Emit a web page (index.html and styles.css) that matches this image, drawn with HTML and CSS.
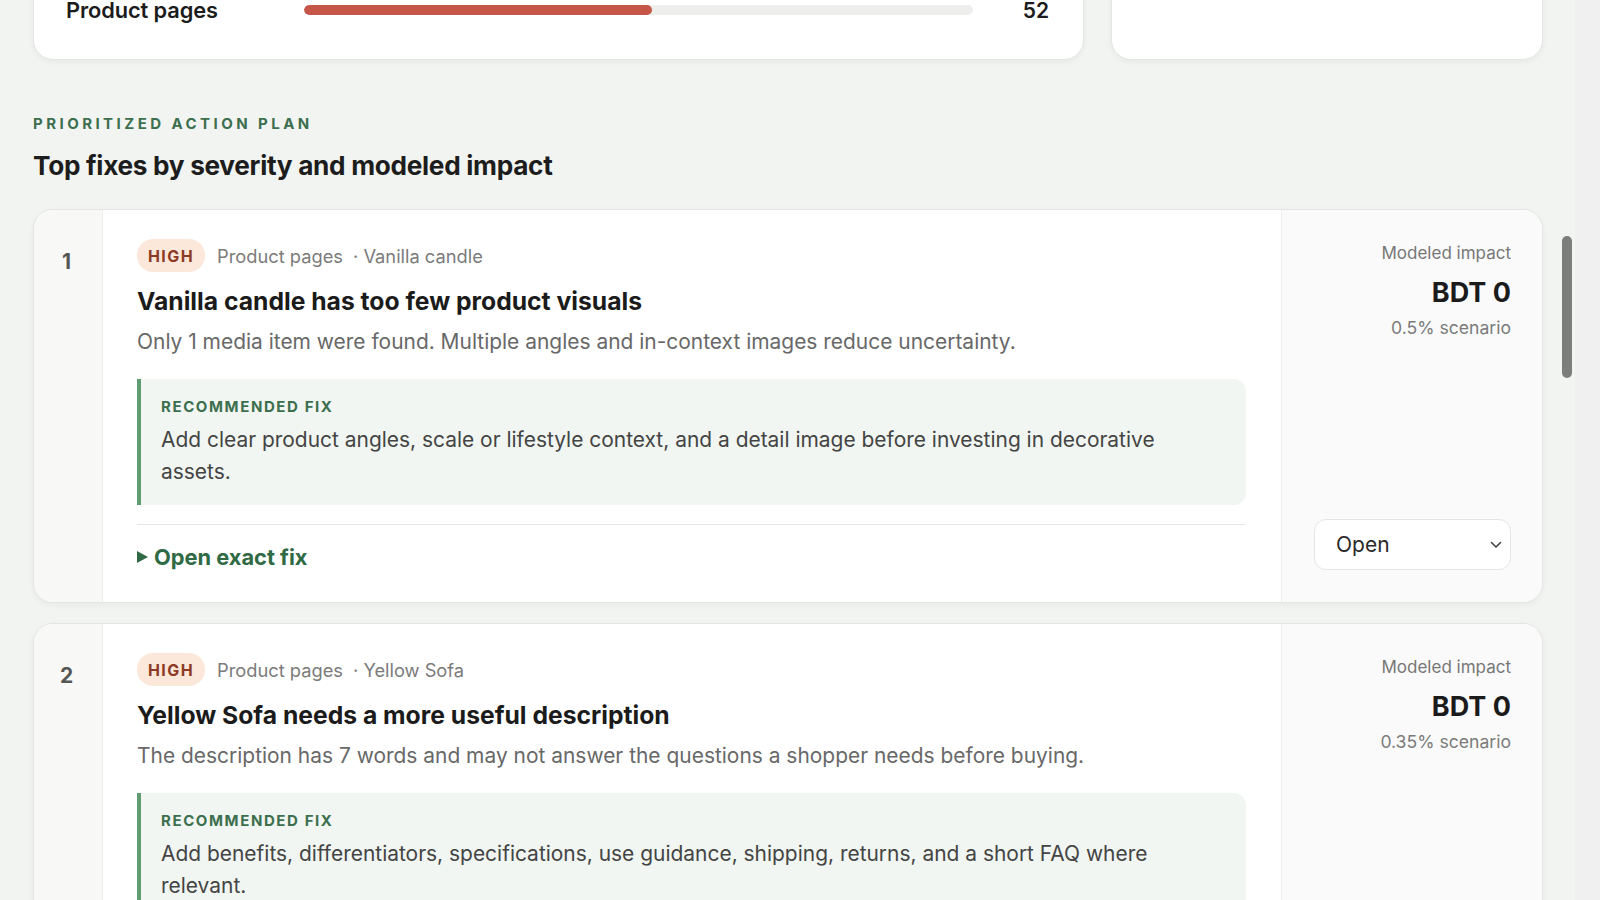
FILE: index.html
```html
<!DOCTYPE html>
<html lang="en">
<head>
<meta charset="utf-8">
<title>Store audit – action plan</title>
<link rel="stylesheet" href="styles.css">
</head>
<body>
<main class="page">
  <section class="summary">
    <div class="card summary-card">
      <div class="bar-row">
        <span class="bar-label">Product pages</span>
        <span class="bar-track"><span class="bar-fill" style="width: 52%"></span></span>
        <span class="bar-value">52</span>
      </div>
    </div>
    <div class="card summary-card side"></div>
  </section>

  <section class="plan">
    <p class="eyebrow">PRIORITIZED ACTION PLAN</p>
    <h2 class="plan-title">Top fixes by severity and modeled impact</h2>

    <article class="fix">
      <div class="fix-rank">1</div>
      <div class="fix-body">
        <div class="fix-meta">
          <span class="badge">HIGH</span>
          <span class="meta-area">Product pages</span>
          <span class="meta-item">· Vanilla candle</span>
        </div>
        <h3 class="fix-title">Vanilla candle has too few product visuals</h3>
        <p class="fix-desc">Only 1 media item were found. Multiple angles and in-context images reduce uncertainty.</p>
        <div class="recommend">
          <p class="recommend-label">RECOMMENDED FIX</p>
          <p class="recommend-text">Add clear product angles, scale or lifestyle context, and a detail image before investing in decorative assets.</p>
        </div>
        <details class="exact">
          <summary>Open exact fix</summary>
        </details>
      </div>
      <div class="fix-impact">
        <span class="impact-label">Modeled impact</span>
        <span class="impact-value">BDT 0</span>
        <span class="impact-scenario">0.5% scenario</span>
        <div class="status">
          <span>Open</span>
          <svg class="chev" viewBox="0 0 12 8" width="12" height="8"><path d="M1.5 1.5 6 6l4.5-4.5" fill="none" stroke="#444" stroke-width="1.6" stroke-linecap="round" stroke-linejoin="round"/></svg>
        </div>
      </div>
    </article>

    <article class="fix">
      <div class="fix-rank">2</div>
      <div class="fix-body">
        <div class="fix-meta">
          <span class="badge">HIGH</span>
          <span class="meta-area">Product pages</span>
          <span class="meta-item">· Yellow Sofa</span>
        </div>
        <h3 class="fix-title">Yellow Sofa needs a more useful description</h3>
        <p class="fix-desc">The description has 7 words and may not answer the questions a shopper needs before buying.</p>
        <div class="recommend">
          <p class="recommend-label">RECOMMENDED FIX</p>
          <p class="recommend-text">Add benefits, differentiators, specifications, use guidance, shipping, returns, and a short FAQ where relevant.</p>
        </div>
        <details class="exact">
          <summary>Open exact fix</summary>
        </details>
      </div>
      <div class="fix-impact">
        <span class="impact-label">Modeled impact</span>
        <span class="impact-value">BDT 0</span>
        <span class="impact-scenario">0.35% scenario</span>
        <div class="status">
          <span>Open</span>
          <svg class="chev" viewBox="0 0 12 8" width="12" height="8"><path d="M1.5 1.5 6 6l4.5-4.5" fill="none" stroke="#444" stroke-width="1.6" stroke-linecap="round" stroke-linejoin="round"/></svg>
        </div>
      </div>
    </article>
  </section>
</main>
<div class="scroll-gutter"></div>
<div class="scroll-thumb"></div>
</body>
</html>
```

FILE: styles.css
```css
* { box-sizing: border-box; }

html, body {
  margin: 0;
  height: 900px;
  overflow: hidden;
}

body {
  background: #f2f4f1;
  font-family: Inter, "Noto Sans", "Liberation Sans", sans-serif;
  color: #1c1c1c;
}

.page {
  padding: 0 57px 40px 33px;
}

p, h2, h3 { margin: 0; }

.card {
  background: #fff;
  border: 1px solid #e3e6e2;
  border-radius: 20px;
  box-shadow: 0 2px 6px rgba(30, 40, 30, 0.05);
}

/* summary cards, scrolled partly out of view */
.summary {
  display: grid;
  grid-template-columns: 1fr 432px;
  gap: 27px;
  margin-top: -40px;
}

.summary-card {
  height: 100px;
  padding: 36px 34px 0 32px;
}

.bar-row {
  display: grid;
  grid-template-columns: 238px 1fr 76px;
  align-items: center;
  height: 22px;
}

.bar-label {
  font-size: 21.8px;
  font-weight: 600;
  letter-spacing: -0.1px;
}

.bar-track {
  display: block;
  height: 10px;
  background: #eeefed;
  border-radius: 5px;
  overflow: hidden;
}

.bar-fill {
  display: block;
  height: 100%;
  background: #c55648;
  border-radius: 5px;
}

.bar-value {
  text-align: right;
  font-size: 21px;
  font-weight: 600;
}

/* action plan */
.plan { padding-top: 54px; }

.eyebrow {
  font-size: 15px;
  line-height: 20px;
  font-weight: 700;
  letter-spacing: 3.45px;
  color: #3c6f4e;
}

.plan-title {
  margin-top: 16px;
  font-size: 26.2px;
  line-height: 32px;
  font-weight: 700;
  letter-spacing: -0.3px;
  color: #1d1d1d;
}

.fix {
  display: grid;
  grid-template-columns: 69px 1fr 261px;
  margin-top: 27px;
  background: #fff;
  border: 1px solid #e3e6e2;
  border-radius: 20px;
  box-shadow: 0 2px 6px rgba(30, 40, 30, 0.05);
  overflow: hidden;
}

.fix + .fix { margin-top: 20px; }

.fix-rank {
  background: #f8f9f7;
  border-right: 1px solid #eceeeb;
  text-align: center;
  padding-top: 40px;
  padding-right: 3px;
  font-size: 21px;
  line-height: 24px;
  font-weight: 700;
  color: #565656;
}

.fix-body {
  padding: 29px 35px 31px 34px;
}

.fix-meta {
  display: flex;
  align-items: center;
  height: 33px;
  font-size: 18.3px;
  color: #7b7b7b;
}

.badge {
  display: inline-flex;
  align-items: center;
  height: 33px;
  padding: 0 11px;
  border-radius: 16px;
  background: #fbe8da;
  color: #8d3b24;
  font-size: 16px;
  font-weight: 700;
  letter-spacing: 1.4px;
  margin-right: 12px;
}

.meta-item { margin-left: 10px; }

.fix-title {
  margin-top: 14px;
  font-size: 24.7px;
  line-height: 30px;
  font-weight: 700;
  letter-spacing: 0;
  color: #1b1b1b;
}

.fix-desc {
  margin-top: 12px;
  font-size: 20.95px;
  line-height: 28px;
  color: #686868;
}

.recommend {
  margin-top: 23px;
  background: #f1f6f2;
  border-left: 4px solid #5f9c71;
  border-radius: 0 12px 12px 0;
  padding: 18px 80px 17px 20px;
}

.recommend-label {
  font-size: 15px;
  line-height: 20px;
  font-weight: 700;
  letter-spacing: 1.6px;
  color: #3c6f4e;
}

.recommend-text {
  margin-top: 7px;
  font-size: 20.95px;
  line-height: 32px;
  color: #444;
}

.exact {
  margin-top: 19px;
  border-top: 1px solid #e6e8e5;
  padding-top: 18px;
}

.exact summary {
  list-style: none;
  display: flex;
  align-items: center;
  gap: 6px;
  font-size: 21.8px;
  line-height: 28px;
  font-weight: 700;
  color: #2f6a45;
  cursor: pointer;
}

.exact summary::-webkit-details-marker { display: none; }

.exact summary::before {
  content: "";
  width: 0;
  height: 0;
  border-left: 11px solid #2f6a45;
  border-top: 6.5px solid transparent;
  border-bottom: 6.5px solid transparent;
}

.fix-impact {
  display: flex;
  flex-direction: column;
  align-items: flex-end;
  background: #fafafa;
  border-left: 1px solid #eceeeb;
  padding: 33px 31px 32px 31px;
}

.impact-label {
  font-size: 17px;
  line-height: 20px;
  color: #777;
}

.impact-value {
  margin-top: 13px;
  font-size: 27px;
  line-height: 34px;
  font-weight: 700;
  color: #1b1b1b;
}

.impact-scenario {
  margin-top: 7px;
  font-size: 17.6px;
  line-height: 22px;
  color: #7b7b7b;
}

.status {
  margin-top: auto;
  width: 197px;
  height: 51px;
  display: flex;
  align-items: center;
  justify-content: space-between;
  padding: 0 8px 0 21px;
  background: #fff;
  border: 1px solid #e4e6e3;
  border-radius: 12px;
  font-size: 21px;
  color: #2a2a2a;
}

/* window scrollbar */
.scroll-gutter {
  position: fixed;
  top: 0;
  right: 0;
  width: 25px;
  height: 100%;
  background: #f0f0f0;
}

.scroll-thumb {
  position: fixed;
  top: 236px;
  left: 1562px;
  width: 10px;
  height: 142px;
  border-radius: 5px;
  background: #7c7e7c;
}
```
